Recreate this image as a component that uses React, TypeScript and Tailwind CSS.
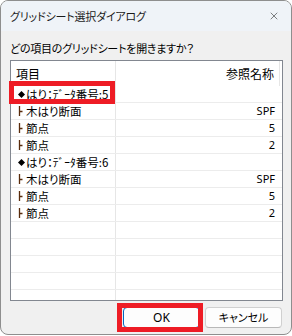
import { X } from "lucide-react";

const jp = "font-['Noto_Sans_CJK_JP','Noto_Sans',sans-serif] [font-feature-settings:'palt']";

type Row = { kind: "head" | "child" | "empty"; label?: string; value?: string };

const rows: Row[] = [
    { kind: "head", label: "はり：ﾃﾞｰﾀ番号:5" },
    { kind: "child", label: "木はり断面", value: "SPF" },
    { kind: "child", label: "節点", value: "5" },
    { kind: "child", label: "節点", value: "2" },
    { kind: "head", label: "はり：ﾃﾞｰﾀ番号:6" },
    { kind: "child", label: "木はり断面", value: "SPF" },
    { kind: "child", label: "節点", value: "5" },
    { kind: "child", label: "節点", value: "2" },
    { kind: "empty" },
    { kind: "empty" },
    { kind: "empty" },
    { kind: "empty" },
    { kind: "empty" },
];

function Diamond() {
    return (
        <svg width="7" height="7" viewBox="0 0 7 7" className="shrink-0">
            <polygon points="3.5,0 7,3.5 3.5,7 0,3.5" fill="#000" />
        </svg>
    );
}

function Branch() {
    return (
        <svg width="7" height="12" viewBox="0 0 7 12" className="shrink-0">
            <line x1="1.5" y1="1" x2="1.5" y2="11" stroke="#5a2c0c" strokeWidth="1.3" />
            <line x1="1.5" y1="6.5" x2="4.5" y2="6.5" stroke="#5a2c0c" strokeWidth="1.3" />
        </svg>
    );
}

function App() {
    return (
        <div className="w-[292px] h-[336px] bg-white">
            <div className={`relative w-[292px] h-[335px] rounded-[8px] border border-[#8e8e8e] bg-[#f0f0f0] overflow-hidden flex flex-col ${jp}`}>
                {/* title bar */}
                <div className="h-[30px] shrink-0 bg-[#eff3f8] flex items-center justify-between pl-[9px] pr-[11px]">
                    <span className="text-[11px] leading-[14px] text-[#1a1a1a] tracking-[-0.2px]">グリッドシート選択ダイアログ</span>
                    <X size={12} strokeWidth={1.1} className="text-[#1a1a1a]" />
                </div>

                <div className="flex flex-col pt-[9px] pl-[9px] pr-[8px]">
                    <p className="text-[11px] leading-[16px] text-black tracking-[-0.25px]">どの項目のグリッドシートを開きますか？</p>

                    {/* grid */}
                    <div className="mt-[4px] h-[241px] border border-[#828790] bg-white overflow-hidden flex flex-col">
                        <div className="h-[25px] shrink-0 flex text-[12px] text-black">
                            <div className="w-[105px] border-r border-[#e6e6e6] pl-[5px] flex items-center">項目</div>
                            <div className="w-[164px] border-r border-[#e6e6e6] pr-[5px] flex items-center justify-end">参照名称</div>
                        </div>
                        {rows.map((r, i) => (
                            <div key={i} className="h-[17px] shrink-0 flex border-b border-[#ececec] text-[11.5px] leading-[16px] text-black">
                                <div className="w-[105px] border-r border-[#e6e6e6] pl-[7px] flex items-center gap-[1px] whitespace-nowrap overflow-hidden">
                                    {r.kind === "head" && <Diamond />}
                                    {r.kind === "child" && <Branch />}
                                    {r.label && <span>{r.label}</span>}
                                </div>
                                <div className="flex-1 pr-[7px] flex items-center justify-end font-['Noto_Sans',sans-serif] text-[11px]">
                                    {r.value}
                                </div>
                            </div>
                        ))}
                    </div>

                    {/* buttons */}
                    <div className="mt-[6px] mr-[1px] flex justify-end gap-[5px]">
                        <button className="w-[77px] h-[21px] rounded-[4px] border border-[#0067c0] bg-[#fdfdfd] text-[12px] leading-[19px] font-normal text-black font-['Noto_Sans',sans-serif]">
                            OK
                        </button>
                        <button className="w-[77px] h-[21px] rounded-[4px] border border-[#d0d0d0] border-b-[#b8b8b8] bg-[#fdfdfd] text-[11px] leading-[19px] text-black">
                            キャンセル
                        </button>
                    </div>
                </div>

                {/* red annotation boxes */}
                <div className="absolute left-[8px] top-[80px] w-[106px] h-[23px] border-[5px] border-[#ee1c25]" />
                <div className="absolute left-[116px] top-[302px] w-[86px] h-[29px] border-[5px] border-[#ee1c25]" />
            </div>
        </div>
    );
}

export default App;
